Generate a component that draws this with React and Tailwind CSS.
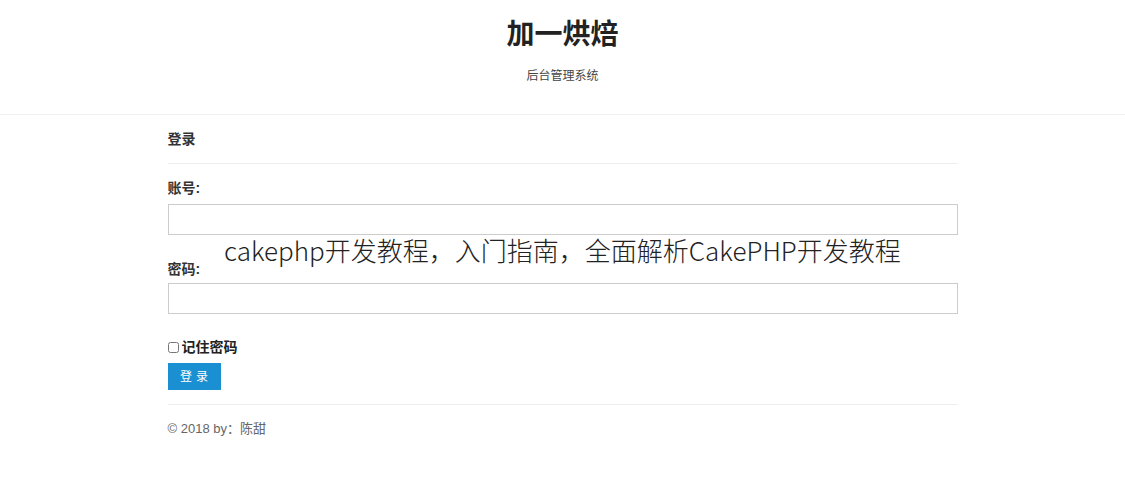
import React from "react";

const SANS = "font-['Helvetica_Neue','Liberation_Sans','Noto_Sans_CJK_SC',sans-serif]";

function Field({ label, type = "text", gap = "mt-[6px]" }) {
  return (
    <div>
      <label className="block text-[14px] leading-[20px] font-bold text-[#333]">{label}</label>
      <input
        type={type}
        className={`${gap} block w-full h-[31px] border border-[#ccc] bg-white px-2 text-[14px] outline-none`}
      />
    </div>
  );
}

export default function App() {
  return (
    <div className={`relative min-h-[490px] bg-white text-[#333] ${SANS}`}>
      <header className="h-[115px] border-b border-[#f0f0f0] flex flex-col items-center">
        <h1 className="mt-[20px] text-[28px] leading-[30px] font-bold text-[#222]">加一烘焙</h1>
        <p className="mt-[20px] text-[12px] leading-[12px] text-[#444]">后台管理系统</p>
      </header>

      <main className="w-[790px] mx-auto">
        <h2 className="pt-[14px] text-[14px] leading-[20px] font-bold text-[#333]">登录</h2>
        <hr className="mt-[14px] border-t border-[#eee]" />

        <div className="mt-[14px]">
          <Field label="账号:" />
        </div>
        <div className="mt-[24px]">
          <Field label="密码:" type="password" gap="mt-[4px]" />
        </div>

        <label className="mt-[23px] flex items-center gap-[3px] text-[14px] leading-[20px] font-bold text-[#222]">
          <input type="checkbox" className="w-[11px] h-[11px] m-0" />
          记住密码
        </label>
        <button className="mt-[6px] block w-[53px] h-[27px] bg-[#1a90d2] text-white text-[12px] tracking-[4px] pl-[4px]">
          登录
        </button>

        <hr className="mt-[14px] border-t border-[#eee]" />
        <p className="mt-[14px] text-[13px] leading-[20px] text-[#666]">© 2018 by：陈甜</p>
      </main>

      <div className="absolute left-[258px] top-[236px] h-[34px] w-[650px] bg-white">
        <span className="absolute -left-[34px] -top-[3px] whitespace-nowrap text-[26px] leading-[34px] font-light text-[#222] font-['Noto_Sans_CJK_SC','Noto_Sans',sans-serif]">
          cakephp开发教程，入门指南，全面解析CakePHP开发教程
        </span>
      </div>
    </div>
  );
}
